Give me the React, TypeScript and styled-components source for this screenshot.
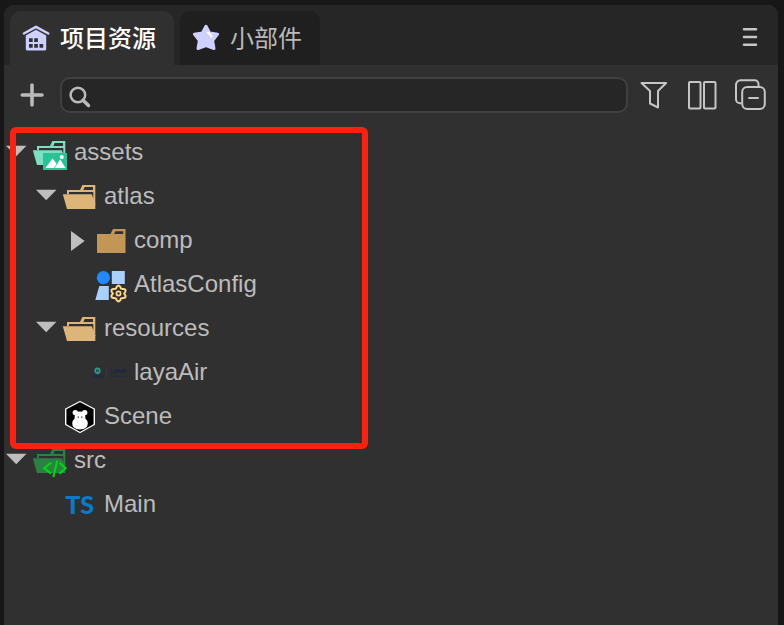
import React from "react";
import styled, { createGlobalStyle } from "styled-components";

const GlobalStyle = createGlobalStyle`
  * { box-sizing: border-box; }
  body {
    margin: 0;
    background: #171717;
    font-family: "Liberation Sans", "Noto Sans CJK SC", sans-serif;
    overflow: hidden;
  }
`;

const Frame = styled.div`
  height: 100vh;
  padding: 5px 6px 0 4px;
`;

const Panel = styled.main`
  position: relative;
  height: 100%;
  display: flex;
  flex-direction: column;
  background: #303030;
  border-radius: 10px 10px 0 0;
  overflow: hidden;
`;

const TabBar = styled.header`
  flex: none;
  height: 60px;
  padding: 6px 18px 0 6px;
  display: flex;
  gap: 6px;
  background: #262626;
`;

const Tab = styled.button<{ $active?: boolean; $width: number }>`
  width: ${(p) => p.$width}px;
  height: 54px;
  padding: 0 0 0 11px;
  border: 0;
  border-radius: 10px 10px 0 0;
  display: flex;
  align-items: center;
  gap: 9px;
  background: ${(p) => (p.$active ? "#303030" : "#1f1f1f")};
  color: ${(p) => (p.$active ? "#ffffff" : "#bababa")};
  font: ${(p) => (p.$active ? 500 : 400)} 24px/52px "Noto Sans CJK SC", sans-serif;
  white-space: nowrap;
`;

const TabLabel = styled.span`
  height: 54px;
`;

const MenuButton = styled.button`
  margin: 13px 0 0 auto;
  width: 20px;
  height: 26px;
  padding: 0;
  border: 0;
  background: none;
`;

const Toolbar = styled.div`
  flex: none;
  height: 60px;
  padding: 0 10px 0 16px;
  display: flex;
  align-items: center;
`;

const SearchField = styled.div`
  flex: none;
  width: 568px;
  height: 36px;
  margin: 0 11px 0 12px;
  padding-left: 6px;
  display: flex;
  align-items: center;
  border: 2px solid #404040;
  border-radius: 10px;
  background: #262626;
`;

const Actions = styled.div`
  display: flex;
  gap: 16px;
`;

const Glyph = styled.svg`
  display: block;
  flex: none;
  overflow: visible;
`;

const Tree = styled.ul`
  list-style: none;
  margin: 0;
  padding: 5px 0 0;
`;

const Row = styled.li<{ $level: number }>`
  height: 44px;
  padding-left: ${(p) => 2 + p.$level * 30}px;
  display: grid;
  grid-template-columns: 26px 42px auto;
  align-items: center;
  color: #bcbcbc;
  font-size: 24px;
  line-height: 44px;
`;

const Label = styled.span`
  white-space: nowrap;
`;

const Highlight = styled.div`
  position: absolute;
  left: 6px;
  top: 122px;
  width: 358px;
  height: 322px;
  border: 6px solid #ff2010;
  border-radius: 6px;
  pointer-events: none;
`;

const HomeIcon = () => (
  <Glyph width="30" height="30" viewBox="0 0 30 30">
    <path d="M2.900 10.500 15 3.800 27.300 10.500" fill="none" stroke="#ced0ff" strokeWidth="2.500" strokeLinecap="round" strokeLinejoin="round" />
    <path d="M4.800 12.500 15 6.800 25.200 12.500V26a1.500 1.500 0 0 1-1.500 1.500H6.300A1.500 1.500 0 0 1 4.800 26Z" fill="#ced0ff" />
    <path d="M8 15.200h3.700v3.700H8zM13.200 15.200h3.700v3.700h-3.700zM8 21h3.700v3.700H8zM13.200 21h3.700v3.700h-3.700zM18.500 21h3.700v3.700h-3.700z" fill="#303030" />
  </Glyph>
);

const StarIcon = () => (
  <Glyph width="30" height="30" viewBox="0 0 30 30">
    <path d="m15 3.300 3.600 6.700 8 1.200-5 6.400 1.400 7.900-8-2.800-8 2.800 1.400-7.900-5-6.400 8-1.200Z" fill="#ced0ff" stroke="#ced0ff" strokeWidth="3" strokeLinejoin="round" />
    <path d="M16.600 9.700q3 1 3.700 4" fill="none" stroke="#fff" strokeWidth="2" strokeLinecap="round" />
  </Glyph>
);

const MenuIcon = () => (
  <Glyph width="20" height="26" viewBox="0 0 20 26">
    <path d="M4 5.3h12M4 13h12M4 20.7h12" stroke="#c6c6c6" strokeWidth="2.600" strokeLinecap="round" />
  </Glyph>
);

const PlusIcon = () => (
  <Glyph width="28" height="28" viewBox="0 0 28 28">
    <path d="M12 4v20M2.300 14h19.700" stroke="#bababa" strokeWidth="3.600" strokeLinecap="round" />
  </Glyph>
);

const SearchIcon = () => (
  <Glyph width="24" height="26" viewBox="0 0 24 26">
    <circle cx="9.900" cy="13" r="7.300" fill="none" stroke="#bababa" strokeWidth="2.500" />
    <path d="m15 18.300 5.500 5.200" stroke="#bababa" strokeWidth="3.600" strokeLinecap="round" />
  </Glyph>
);

const FilterIcon = () => (
  <Glyph width="32" height="34" viewBox="0 0 32 34">
    <path d="M2.500 5h24.600L19 13V29.500l-8-4V13Z" fill="none" stroke="#c6c6c6" strokeWidth="2" strokeLinejoin="round" />
  </Glyph>
);

const ColumnsIcon = () => (
  <Glyph width="32" height="34" viewBox="0 0 32 34">
    <rect x="2" y="4" width="11.500" height="26.500" rx="1" fill="none" stroke="#c6c6c6" strokeWidth="2" />
    <rect x="17" y="4" width="11.500" height="26.500" rx="1" fill="none" stroke="#c6c6c6" strokeWidth="2" />
  </Glyph>
);

const CollapseIcon = () => (
  <Glyph width="32" height="34" viewBox="0 0 32 34">
    <path d="M6.600 25.200H5a4 4 0 0 1-4-4V6.800a4.500 4.500 0 0 1 4.500-4.500h14a4 4 0 0 1 4 4v2" fill="none" stroke="#c6c6c6" strokeWidth="2" />
    <rect x="7.200" y="9" width="22.600" height="22" rx="5" fill="none" stroke="#c6c6c6" strokeWidth="2" />
    <path d="M14 20h9" stroke="#c6c6c6" strokeWidth="2" strokeLinecap="round" />
  </Glyph>
);

const Arrow = ({ open }: { open?: boolean }) => (
  <Glyph width="20" height="24" viewBox="0 0 20 24">
    <path d={open ? "M0 5.700h20.500L10.200 16.200Z" : "M5 3v20l13.700-10Z"} fill="#bebebe" />
  </Glyph>
);

const OpenFolder = ({ color }: { color: string }) => (
  <>
    <path d="M5 16V12h13l2.400-5H33.300v19h-2V14H7v2Z" fill={color} />
    <path d="M22.700 9H31v3h-9.700Z" fill="#303030" />
    <path d="M.800 16.200H29.800L33.300 25.500V31H5Z" fill={color} />
  </>
);

const IconBox = ({ children }: { children: React.ReactNode }) => (
  <Glyph width="36" height="36" viewBox="0 0 36 36">{children}</Glyph>
);

const AssetsIcon = () => (
  <IconBox>
    <OpenFolder color="#7edec1" />
    <path d="M11 19h24v17H11z" fill="#28c498" />
    <path d="m13.500 34 7-9.500L24.800 30l3.400-4.500L33.500 34Z" fill="#fff" />
    <path d="m22 34 4-5.400" stroke="#28c498" strokeWidth=".8" />
    <circle cx="29.700" cy="23" r="2" fill="#fff" />
  </IconBox>
);

const FolderIcon = () => (
  <IconBox><OpenFolder color="#deb579" /></IconBox>
);

const ClosedFolderIcon = () => (
  <IconBox>
    <path d="M5 12h13.500l2.500-5H33.500v24H5Z" fill="#c29756" />
    <path d="M23.500 9.200h7.700V12h-9.200Z" fill="#303030" />
  </IconBox>
);

const GEAR =
  "M16.300 3.300Q18 .8 19.700 3.300L20.500 5Q21.500 5.700 23.200 5.500Q26 6 24.700 8.500L23.600 10L24.700 11.500Q26 14 23.200 14.500Q21.500 14.300 20.500 15L19.700 16.700Q18 19.200 16.300 16.700L15.500 15Q14.500 14.300 12.800 14.500Q10 14 11.300 11.500L12.400 10L11.300 8.500Q10 6 12.800 5.500Q14.500 5.700 15.500 5Z";

const AtlasIcon = () => (
  <IconBox>
    <circle cx="11.400" cy="11.700" r="6.600" fill="#2189ff" />
    <path d="M19.800 5h13v13h-13zM7.300 20h9.500v14H3.300Z" fill="#a9cfff" />
    <path d={GEAR} transform="translate(8.500 17.500)" fill="#303030" stroke="#ffd989" strokeWidth="2" strokeLinejoin="round" />
    <circle cx="26.500" cy="27.500" r="2.100" fill="none" stroke="#ffd989" strokeWidth="1.700" />
  </IconBox>
);

const LayaIcon = () => (
  <IconBox>
    <circle cx="5.500" cy="16.700" r="2.300" fill="none" stroke="#25a08b" strokeWidth="1.600" />
    <path d="m3.700 18.500 1.800 2 1.800-2" fill="#25a08b" />
    <path d="M5.500 15.800v1.800" stroke="#25a08b" strokeWidth=".8" />
    <path d="M14.500 13.500v10" stroke="#3c3c40" strokeWidth=".7" />
    <text x="0" y="23.800" fontSize="3.200" fontWeight="700" fontFamily="Liberation Sans" fill="#1b2549" textLength="12">LAYABOX</text>
    <text x="18.500" y="18.800" fontSize="4.800" fontWeight="700" fontFamily="Liberation Sans" fill="#1b2549" textLength="16">LAYAAIR</text>
    <path d="M18 22.300h17" stroke="#252b3d" strokeWidth="1" />
  </IconBox>
);

const SceneIcon = () => (
  <IconBox>
    <path d="M18 3.500 32.300 11v15.500L18 34.500 3.700 26.500V11Z" fill="#000" stroke="#fff" strokeWidth="1.400" strokeLinejoin="round" />
    <circle cx="13.300" cy="14.600" r="2.700" fill="#fff" />
    <circle cx="22.700" cy="14.600" r="2.700" fill="#fff" />
    <path d="M13 15.600q.5-2 5-2t5 2q.5 3.500.3 5 2.500 2 2.500 5 0 5.800-7.800 5.800t-7.800-5.800q0-3 2.500-5-.2-1.500.3-5Z" fill="#fff" />
    <path d="M16.300 18.500v1.300M19.800 18.500v1.300" stroke="#000" strokeWidth="1" />
  </IconBox>
);

const SourceIcon = () => (
  <IconBox>
    <OpenFolder color="#2b8044" />
    <path d="m19.200 20.700-7 5.500 7 5.500M27.400 20.700l6.200 5.500-6.200 5.500M25.200 18.500l-3.800 16.500" fill="none" stroke="#00d80e" strokeWidth="2.100" />
  </IconBox>
);

const TsIcon = () => (
  <IconBox>
    <text x="3.200" y="28.400" fontFamily="Lato, sans-serif" fontSize="25" fontWeight="900" fill="#087bce" textLength="29" lengthAdjust="spacingAndGlyphs">TS</text>
  </IconBox>
);

type Node = { label: string; level: number; icon: React.ComponentType; open?: boolean };

const nodes: Node[] = [
  { label: "assets", level: 0, icon: AssetsIcon, open: true },
  { label: "atlas", level: 1, icon: FolderIcon, open: true },
  { label: "comp", level: 2, icon: ClosedFolderIcon, open: false },
  { label: "AtlasConfig", level: 2, icon: AtlasIcon },
  { label: "resources", level: 1, icon: FolderIcon, open: true },
  { label: "layaAir", level: 2, icon: LayaIcon },
  { label: "Scene", level: 1, icon: SceneIcon },
  { label: "src", level: 0, icon: SourceIcon, open: true },
  { label: "Main", level: 1, icon: TsIcon },
];

export default function App() {
  return (
    <>
      <GlobalStyle />
      <Frame>
        <Panel>
          <TabBar>
            <Tab $active $width={164}><HomeIcon /><TabLabel>项目资源</TabLabel></Tab>
            <Tab $width={140}><StarIcon /><TabLabel>小部件</TabLabel></Tab>
            <MenuButton aria-label="menu"><MenuIcon /></MenuButton>
          </TabBar>
          <Toolbar>
            <PlusIcon />
            <SearchField><SearchIcon /></SearchField>
            <Actions>
              <FilterIcon />
              <ColumnsIcon />
              <CollapseIcon />
            </Actions>
          </Toolbar>
          <Tree>
            {nodes.map(({ label, level, icon: Icon, open }) => (
              <Row key={label} $level={level}>
                {open === undefined ? <span /> : <Arrow open={open} />}
                <Icon />
                <Label>{label}</Label>
              </Row>
            ))}
          </Tree>
          <Highlight />
        </Panel>
      </Frame>
    </>
  );
}
